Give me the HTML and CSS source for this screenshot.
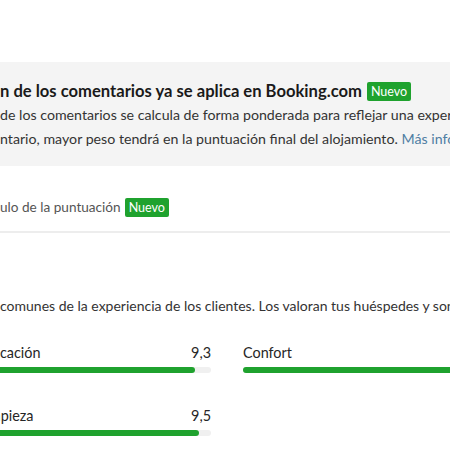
FILE: index.html
```html
<!DOCTYPE html>
<html lang="es">
<head>
    <meta charset="UTF-8">
    <meta name="viewport" content="width=device-width, initial-scale=1.0">
    <title>Puntuación</title>
    <link rel="stylesheet" href="styles.css">
</head>
<body>
    <div class="page">
        <section class="notice">
            <h2 class="notice-title">n de los comentarios ya se aplica en Booking.com <span class="badge">Nuevo</span></h2>
            <p class="notice-text">de los comentarios se calcula de forma ponderada para reflejar una experiencia</p>
            <p class="notice-text">ntario, mayor peso tendrá en la puntuación final del alojamiento. <a href="" class="more">Más información</a></p>
        </section>

        <div class="tab-row">
            <span class="tab">ulo de la puntuación</span>
            <span class="badge">Nuevo</span>
        </div>

        <p class="intro">comunes de la experiencia de los clientes. Los valoran tus huéspedes y son</p>

        <ul class="scores">
            <li class="score">
                <div class="score-head"><span>Ubicación</span><span>9,3</span></div>
                <div class="track"><div class="fill" style="width:93%"></div></div>
            </li>
            <li class="score">
                <div class="score-head"><span>Confort</span><span>9,6</span></div>
                <div class="track"><div class="fill" style="width:96%"></div></div>
            </li>
            <li class="score">
                <div class="score-head"><span>Limpieza</span><span>9,5</span></div>
                <div class="track"><div class="fill" style="width:95%"></div></div>
            </li>
        </ul>
    </div>
</body>
</html>
```

FILE: styles.css
```css
*{box-sizing: border-box;}
ul{list-style: none;margin:0;padding:0;}
p,h2{margin:0;}
a{text-decoration: none;}
body{
    margin:0;
    background:#fff;
    font-family: "Lato", "Noto Sans", sans-serif;
    color:#262626;
    overflow:hidden;
}

.page{
    width:700px;
    padding-top:62px;
}

.notice{
    background:#f4f4f4;
    height:104px;
    padding:17px 0 0 0;
    white-space:nowrap;
}
.notice-title{
    font-size:16.6px;
    font-weight:700;
    line-height:24px;
    color:#1a1a1a;
    display:flex;
    align-items:center;
    gap:5px;
}
.notice-text{
    font-size:14.2px;
    line-height:24px;
    color:#333;
}
.notice-text .more{
    color:#4f7ea3;
}

.badge{
    display:inline-block;
    background:#1fa22e;
    color:#fff;
    font-size:12.5px;
    font-weight:400;
    line-height:19px;
    padding:0 4px;
    border-radius:2px;
}

.tab-row{
    height:67px;
    display:flex;
    align-items:center;
    gap:4px;
    padding-top:17px;
    border-bottom:2px solid #ededed;
}
.tab{
    font-size:13.6px;
    color:#555;
}

.intro{
    margin-top:63px;
    font-size:14px;
    line-height:20px;
    color:#333;
    white-space:nowrap;
}

.scores{
    margin-top:27px;
    margin-left:-22px;
    display:grid;
    grid-template-columns:233px 233px;
    column-gap:32px;
    row-gap:33px;
}
.score-head{
    display:flex;
    justify-content:space-between;
    font-size:14.4px;
    line-height:20px;
    color:#262626;
}
.track{
    margin-top:4px;
    height:6px;
    background:#f0f0f0;
    border-radius:3px;
}
.fill{
    height:100%;
    background:#1fa22e;
    border-radius:3px;
}
```
